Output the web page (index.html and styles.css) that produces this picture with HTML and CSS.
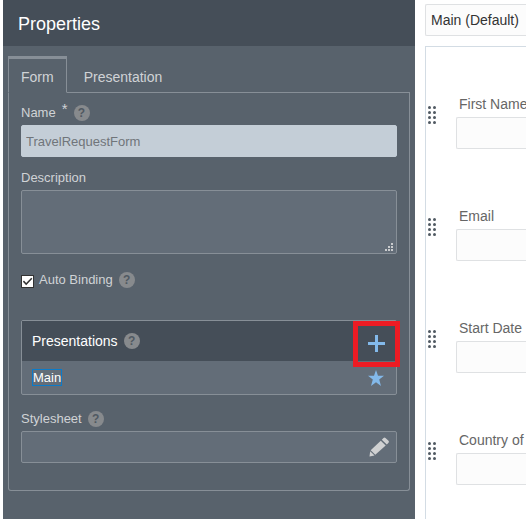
FILE: index.html
```html
<!DOCTYPE html>
<html lang="en">
<head>
<meta charset="utf-8">
<meta name="viewport" content="width=device-width, initial-scale=1">
<title>Properties</title>
<link rel="stylesheet" href="styles.css">
</head>
<body>
<svg class="sprite" aria-hidden="true">
  <symbol id="grip" viewBox="0 0 8 18">
    <circle cx="1.5" cy="1.5" r="1.5"/><circle cx="6.5" cy="1.5" r="1.5"/>
    <circle cx="1.5" cy="6.5" r="1.5"/><circle cx="6.5" cy="6.5" r="1.5"/>
    <circle cx="1.5" cy="11.5" r="1.5"/><circle cx="6.5" cy="11.5" r="1.5"/>
    <circle cx="1.5" cy="16.5" r="1.5"/><circle cx="6.5" cy="16.5" r="1.5"/>
  </symbol>
</svg>
<div class="app">
  <aside class="panel">
    <h1 class="panel-title">Properties</h1>
    <div class="tabs" role="tablist">
      <button class="tab tab-active" type="button" role="tab" aria-selected="true">Form</button>
      <button class="tab" type="button" role="tab" aria-selected="false">Presentation</button>
    </div>
    <form class="pane">
      <div class="label-row">
        <label for="name">Name</label><span class="required">*</span>
        <button class="help" type="button">?</button>
      </div>
      <input class="field field-readonly" id="name" type="text" value="TravelRequestForm" readonly>

      <div class="label-row">
        <label for="description">Description</label>
      </div>
      <div class="area">
        <textarea class="field field-area" id="description"></textarea>
        <svg class="resizer" viewBox="0 0 8 8" shape-rendering="crispEdges" aria-hidden="true">
          <path d="M6 0h2v2h-2zM3 3h2v2h-2zM6 3h2v2h-2zM0 6h2v2h-2zM3 6h2v2h-2zM6 6h2v2h-2z"/>
        </svg>
      </div>

      <div class="check-row">
        <input class="check" id="binding" type="checkbox" checked>
        <label for="binding">Auto Binding</label>
        <button class="help" type="button">?</button>
      </div>

      <section class="list">
        <header class="list-head">
          <h2 class="list-title">Presentations</h2>
          <button class="help" type="button">?</button>
          <button class="add" type="button" aria-label="Add presentation">
            <svg class="plus" viewBox="0 0 17 17" aria-hidden="true"><path d="M7 0h3v7h7v3h-7v7h-3v-7h-7v-3h7z"/></svg>
          </button>
        </header>
        <div class="list-row">
          <a class="list-link" href="#">Main</a>
          <svg class="star" viewBox="0 0 16 16" aria-hidden="true"><path d="M8 0l2 5.800h6l-4.800 3.800 1.800 6.400-5-3.800-5 3.800 1.800-6.400L0 5.800h6z"/></svg>
        </div>
      </section>

      <div class="label-row">
        <label for="stylesheet">Stylesheet</label>
        <button class="help" type="button">?</button>
      </div>
      <div class="picker">
        <input class="picker-input" id="stylesheet" type="text">
        <button class="edit" type="button" aria-label="Edit stylesheet">
          <svg class="pencil" viewBox="0 0 20 20" aria-hidden="true">
            <path d="M14.500 1q1-1 2 0l3 2.700q.8 1 0 2L17.800 7.400 12.800 2.700z"/>
            <path d="M11.800 3.700l4.900 4.700L6.300 17.800 1.700 13.200z"/>
            <path d="M1.200 14.200l4.300 4.300-5 1z"/>
          </svg>
        </button>
      </div>
    </form>
  </aside>

  <main class="canvas">
    <select class="chooser" aria-label="Presentation">
      <option>Main (Default)</option>
    </select>
    <div class="sheet">
      <div class="item">
        <svg class="grip" aria-hidden="true"><use href="#grip"/></svg>
        <label class="item-label" for="first">First Name</label>
        <input class="item-input" id="first" type="text">
      </div>
      <div class="item">
        <svg class="grip" aria-hidden="true"><use href="#grip"/></svg>
        <label class="item-label" for="email">Email</label>
        <input class="item-input" id="email" type="text">
      </div>
      <div class="item">
        <svg class="grip" aria-hidden="true"><use href="#grip"/></svg>
        <label class="item-label" for="start">Start Date</label>
        <input class="item-input" id="start" type="text">
      </div>
      <div class="item">
        <svg class="grip" aria-hidden="true"><use href="#grip"/></svg>
        <label class="item-label" for="country">Country of</label>
        <input class="item-input" id="country" type="text">
      </div>
    </div>
  </main>
</div>
</body>
</html>
```
FILE: styles.css
```css
* { box-sizing: border-box; }

body {
  margin: 0;
  background: #fff;
  font-family: "Liberation Sans", Arial, sans-serif;
  font-size: 13px;
  line-height: 16px;
}

button, input, textarea, select { font: inherit; margin: 0; }
button { border: 0; padding: 0; background: none; cursor: pointer; }

.sprite { display: none; }

.app {
  display: flex;
  gap: 10px;
  height: 100vh;
  padding-left: 3px;
  overflow: hidden;
}

/* Properties panel */
.panel {
  flex: 0 0 412px;
  background: #58626c;
  color: #d0d3d6;
}

.panel-title {
  margin: 0;
  padding: 13px 15px 11px;
  background: #454e58;
  color: #fff;
  font-size: 18px;
  font-weight: 400;
  line-height: 22px;
}

.tabs {
  display: flex;
  margin: 10px 5px 0;
}

.tab {
  height: 37px;
  padding: 5px 17px 0;
  border-bottom: 1px solid #878f97;
  color: #d0d3d6;
  font-size: 14px;
}

.tab-active {
  padding: 2px 12px 0;
  border: 1px solid #878f97;
  border-top-width: 3px;
  border-bottom-color: transparent;
}

.tabs::after {
  content: "";
  flex: 1;
  border-bottom: 1px solid #878f97;
}

.pane {
  margin: 0 5px;
  padding: 12px 12px 27px;
  border: 1px solid #878f97;
  border-top: 0;
  border-radius: 0 0 3px 3px;
}

.label-row {
  display: flex;
  align-items: center;
  height: 16px;
  margin-bottom: 4px;
}

.required {
  align-self: flex-start;
  margin: -4px 0 0 6px;
  font-size: 15px;
}

.help {
  width: 16px;
  height: 16px;
  margin-left: 6px;
  border-radius: 50%;
  background: #878a8d;
  color: #505962;
  font-size: 12px;
  font-weight: 700;
  line-height: 16px;
}

.field {
  display: block;
  width: 100%;
  height: 32px;
  padding: 0 4px;
  border: 1px solid #878f97;
  border-radius: 2px;
  background: #636d78;
  color: #fff;
}

.field-readonly {
  margin-bottom: 13px;
  border-color: #c4ced7;
  background: #c4ced7;
  color: #70757a;
}

.area { position: relative; }

.field-area {
  height: 64px;
  resize: none;
}

.resizer {
  position: absolute;
  right: 4px;
  bottom: 3px;
  width: 8px;
  height: 8px;
  fill: #c9cbcd;
}

.check-row {
  display: flex;
  align-items: center;
  height: 16px;
  margin: 18px 0 32px;
}

.check {
  appearance: none;
  width: 13px;
  height: 13px;
  margin: 3px 5px 0 0;
  border: 1px solid #333;
  background: #fff;
}

.check:checked::before {
  content: "";
  display: block;
  width: 11px;
  height: 11px;
  background: #333;
  clip-path: polygon(8% 52%, 18% 42%, 38% 64%, 84% 16%, 94% 26%, 38% 84%);
}

.list {
  margin-bottom: 16px;
  border: 1px solid #878f97;
  border-radius: 2px;
  background: #636d78;
}

.list-head {
  display: flex;
  align-items: center;
  height: 40px;
  padding-left: 10px;
  background: #454e58;
  color: #fff;
}

.list-title {
  margin: 0;
  font-size: 14px;
  font-weight: 400;
}

.add {
  position: relative;
  z-index: 1;
  display: grid;
  place-items: center;
  align-self: flex-start;
  flex: none;
  width: 47px;
  height: 46px;
  margin: 0 -4px 0 auto;
  padding-bottom: 1px;
  border: 5px solid #ed1c24;
}

.plus {
  width: 17px;
  height: 17px;
  fill: #83b9ea;
}

.list-row {
  display: flex;
  align-items: center;
  justify-content: space-between;
  height: 33px;
  padding: 0 12px 0 10px;
}

.list-link {
  border: 1px solid #0b7bc9;
  color: #fff;
  line-height: 15px;
  text-decoration: none;
}

.star {
  width: 16px;
  height: 16px;
  fill: #83b9ea;
}

.picker {
  display: flex;
  align-items: center;
  height: 32px;
  padding-right: 7px;
  border: 1px solid #878f97;
  border-radius: 2px;
  background: #636d78;
}

.picker-input {
  flex: 1;
  min-width: 0;
  height: 30px;
  padding: 0 4px;
  border: 0;
  background: transparent;
  color: #fff;
}

.edit, .pencil {
  display: block;
  width: 20px;
  height: 20px;
  fill: #cfd0d1;
}

/* Form canvas */
.canvas {
  flex: 1;
  min-width: 0;
  display: flex;
  flex-direction: column;
  padding-top: 4px;
  font-size: 14px;
}

.chooser {
  appearance: none;
  flex: none;
  height: 32px;
  padding: 0 5px;
  border: 1px solid #dfe1e3;
  border-right: 0;
  border-radius: 2px 0 0 2px;
  background: #fcfcfc;
  color: #333;
}

.sheet {
  flex: 1;
  margin-top: 10px;
  padding-top: 49px;
  border: solid #d3dce4;
  border-width: 1px 0 0 1px;
}

.item {
  display: grid;
  grid-template-columns: 30px minmax(0, 1fr);
  grid-template-rows: 21px 32px;
  align-items: start;
  margin-bottom: 59px;
}

.grip {
  grid-row: span 2;
  width: 8px;
  height: 18px;
  margin: 10px 0 0 2px;
  fill: #505962;
}

.item-label {
  padding-left: 3px;
  color: #666;
  white-space: nowrap;
}

.item-input {
  width: 100%;
  height: 32px;
  padding: 0 5px;
  border: 1px solid #dfe1e3;
  border-right: 0;
  border-radius: 2px 0 0 2px;
  background: #fcfcfc;
}
```
